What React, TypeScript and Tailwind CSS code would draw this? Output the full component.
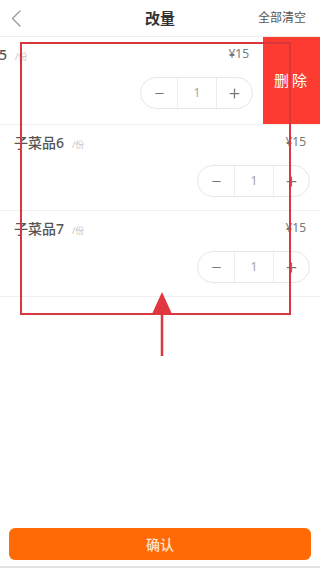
import { Minus, Plus } from 'lucide-react';

interface Dish {
  name: string;
  price: number;
  qty: number;
}

const dishes: Dish[] = [
  { name: '子菜品5', price: 15, qty: 1 },
  { name: '子菜品6', price: 15, qty: 1 },
  { name: '子菜品7', price: 15, qty: 1 },
];

const Stepper = ({ qty }: { qty: number }) => (
  <div className="flex h-[32px] w-[113px] items-stretch rounded-full border border-[#e6e6e6]">
    <div className="flex w-[36px] items-center justify-center">
      <Minus className="h-[13px] w-[13px] text-[#777]" strokeWidth={2} />
    </div>
    <div className="flex flex-1 items-center justify-center border-x border-[#ececec] text-[13px] text-[#a8a8a8]">
      {qty}
    </div>
    <div className="flex w-[35px] items-center justify-center">
      <Plus className="h-[15px] w-[15px] text-[#777]" strokeWidth={2} />
    </div>
  </div>
);

const DishRow = ({ dish }: { dish: Dish }) => (
  <div className="flex h-full w-[320px] shrink-0 flex-col pl-[14px] pr-[10px] pt-[8px]">
    <div className="flex h-[18px] items-center justify-between">
      <div className="flex items-baseline gap-[8px]">
        <span className="text-[14px] font-medium text-[#555]">{dish.name}</span>
        <span className="text-[9px] text-[#c4c4c4]">/份</span>
      </div>
      <span className="mr-[4px] text-[12px] text-[#777]">¥{dish.price}</span>
    </div>
    <div className="mt-[14px] flex justify-end">
      <Stepper qty={dish.qty} />
    </div>
  </div>
);

const App = () => {
  return (
    <div
      className="relative flex h-[568px] w-[320px] flex-col overflow-hidden bg-white"
      style={{ fontFamily: '"Noto Sans", "Noto Sans CJK SC", sans-serif' }}
    >
      {/* Header */}
      <div className="grid h-[37px] shrink-0 grid-cols-[1fr_auto_1fr] items-center border-b border-[#ececec]">
        <div className="pl-[11px]">
          <svg width="10" height="17" viewBox="0 0 10 17" fill="none">
            <path d="M9 1 L1.5 8.5 L9 16" stroke="#9a9a9a" strokeWidth="1.4" strokeLinecap="round" strokeLinejoin="round" />
          </svg>
        </div>
        <div className="text-[15px] font-semibold text-[#333]">改量</div>
        <div className="pr-[14px] text-right text-[12px] text-[#555]">全部清空</div>
      </div>

      {/* Swiped row: content slid left to reveal delete */}
      <div className="flex h-[88px] shrink-0 overflow-hidden border-b border-[#efefef]">
        <div className="-ml-[57px] flex">
          <DishRow dish={dishes[0]} />
        </div>
        <div className="flex w-[58px] shrink-0 items-center justify-center bg-[#fd3b30] text-[15px] tracking-[3px] text-white">
          删除
        </div>
      </div>

      {dishes.slice(1).map((d) => (
        <div key={d.name} className="h-[86px] shrink-0 border-b border-[#efefef]">
          <DishRow dish={d} />
        </div>
      ))}

      <div className="flex-1" />

      {/* Confirm */}
      <div className="px-[9px] pb-[6px]">
        <button className="flex h-[32px] w-full items-center justify-center rounded-[6px] bg-[#ff6a07] text-[14px] font-medium text-[#ffe3cc]">
          确认
        </button>
      </div>
      <div className="h-[2px] shrink-0 bg-[#e2e2e2]" />

      {/* Annotation */}
      <div className="pointer-events-none absolute left-[20px] top-[42px] h-[273px] w-[271px] border-[2.5px] border-[#d9363e]" />
      <svg className="pointer-events-none absolute left-[150px] top-[290px]" width="24" height="68" viewBox="0 0 24 68">
        <polygon points="12,2 2,24 22,24" fill="#e0383e" />
        <line x1="12" y1="20" x2="12" y2="66" stroke="#d9363e" strokeWidth="2.5" />
      </svg>
    </div>
  );
};

export default App;
